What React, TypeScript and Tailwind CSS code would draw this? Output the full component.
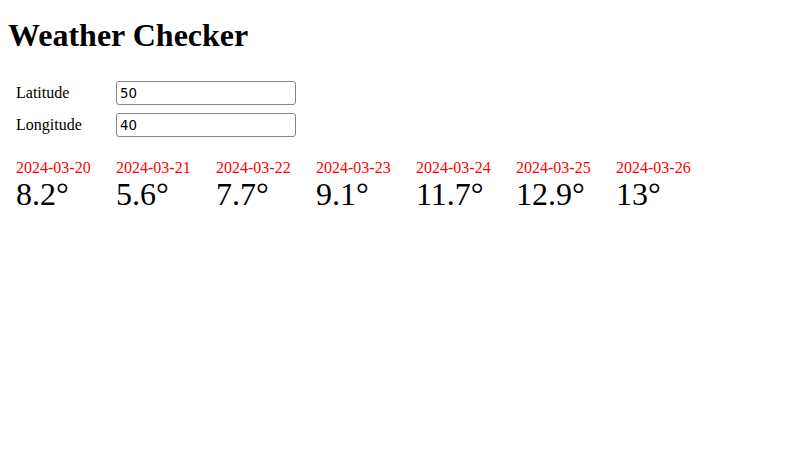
import React, { useState } from "react";

const forecast = [
  { date: "2024-03-20", temp: "8.2" },
  { date: "2024-03-21", temp: "5.6" },
  { date: "2024-03-22", temp: "7.7" },
  { date: "2024-03-23", temp: "9.1" },
  { date: "2024-03-24", temp: "11.7" },
  { date: "2024-03-25", temp: "12.9" },
  { date: "2024-03-26", temp: "13" },
];

export default function App() {
  const [lat, setLat] = useState("50");
  const [lon, setLon] = useState("40");

  return (
    <div className="min-h-screen bg-white px-2 text-black font-['Liberation_Serif','Times_New_Roman',serif]">
      <h1 className="pt-[17px] text-[32px] leading-[37px] font-bold">Weather Checker</h1>

      {/* Coordinates form */}
      <div className="mt-[27px] flex flex-col gap-2 pl-2">
        <div className="flex items-center">
          <label className="w-[100px] text-base">Latitude</label>
          <input
            value={lat}
            onChange={(e) => setLat(e.target.value)}
            className="h-6 w-[180px] rounded-[3px] border border-[#858585] px-[3px] text-[13.33px] font-['DejaVu_Sans',sans-serif]"
          />
        </div>
        <div className="flex items-center">
          <label className="w-[100px] text-base">Longitude</label>
          <input
            value={lon}
            onChange={(e) => setLon(e.target.value)}
            className="h-6 w-[180px] rounded-[3px] border border-[#858585] px-[3px] text-[13.33px] font-['DejaVu_Sans',sans-serif]"
          />
        </div>
      </div>

      {/* Daily forecast */}
      <div className="mt-[22px] flex pl-2">
        {forecast.map((day) => (
          <div key={day.date} className="w-[100px]">
            <div className="text-base leading-[18px] text-[#ff0000]">{day.date}</div>
            <div className="text-[32px] leading-[34px]">{day.temp}°</div>
          </div>
        ))}
      </div>
    </div>
  );
}
